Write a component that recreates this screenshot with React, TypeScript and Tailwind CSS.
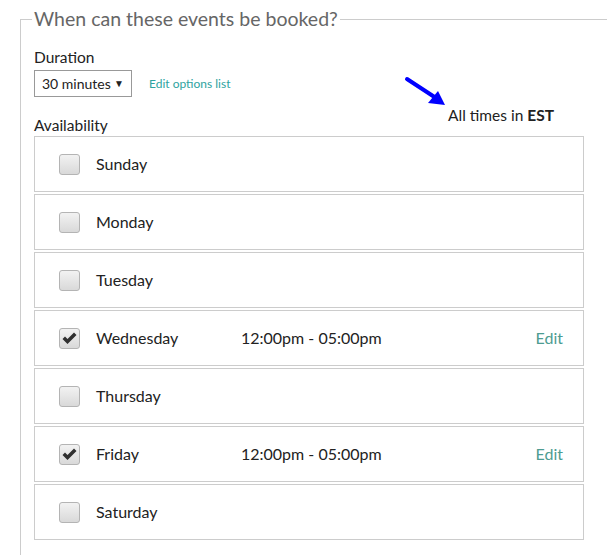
interface Day {
  name: string;
  checked: boolean;
  time?: string;
}

const days: Day[] = [
  { name: "Sunday", checked: false },
  { name: "Monday", checked: false },
  { name: "Tuesday", checked: false },
  { name: "Wednesday", checked: true, time: "12:00pm - 05:00pm" },
  { name: "Thursday", checked: false },
  { name: "Friday", checked: true, time: "12:00pm - 05:00pm" },
  { name: "Saturday", checked: false },
];

function Checkbox({ checked }: { checked: boolean }) {
  return (
    <div className="w-[21px] h-[21px] rounded-[3px] border border-[#b4b4b4] bg-gradient-to-b from-[#f2f2f2] to-[#d9d9d9] flex items-center justify-center shrink-0">
      {checked && (
        <svg width="15" height="13" viewBox="0 0 15 13">
          <polygon points="0.5,7 3,4.5 5.5,7 12,0.5 14.5,3 5.5,12" fill="#303030" />
        </svg>
      )}
    </div>
  );
}

export default function App() {
  return (
    <div className="bg-white w-[607px] h-[555px] overflow-hidden font-['Lato',sans-serif] text-[#222]">
      <fieldset className="ml-5 mt-[7px] w-[640px] border border-[#cccccc] pl-[13px] pb-10">
        <legend className="text-[19.5px] leading-[24px] text-[#666] px-[2px] -ml-[2px]">
          When can these events be booked?
        </legend>

        <div className="w-[550px] mt-[16px]">
          <div className="text-[15.5px] leading-5">Duration</div>
          <div className="flex items-center mt-[3px]">
            <div className="w-[98px] h-[27px] border border-[#999] flex items-center justify-between pl-[7px] pr-[7px] text-[14px] whitespace-nowrap">
              <span>30 minutes</span>
              <span className="text-[10px]">▼</span>
            </div>
            <span className="ml-[17px] text-[12px] text-[#2ea3a0] whitespace-nowrap">Edit options list</span>
          </div>

          <div className="relative flex justify-between items-start mt-[8px]">
            <span className="text-[15.5px] leading-5 mt-[10px]">Availability</span>
            <span className="text-[15.5px] leading-5 mr-[30px]">
              All times in <b className="font-bold">EST</b>
            </span>
            <svg
              className="absolute left-[370px] -top-[29px]"
              width="50"
              height="35"
              viewBox="0 0 50 35"
            >
              <line x1="3" y1="3" x2="32" y2="22" stroke="#0000ff" strokeWidth="4" strokeLinecap="round" />
              <polygon points="41,29 24,27 34,15" fill="#0000ff" />
            </svg>
          </div>

          <div className="flex flex-col gap-[2px] mt-[1px]">
            {days.map((d) => (
              <div
                key={d.name}
                className="h-[56px] border border-[#cccccc] flex items-center pl-6 pr-5 text-[16px]"
              >
                <Checkbox checked={d.checked} />
                <span className="ml-4 w-[145px]">{d.name}</span>
                {d.time && <span>{d.time}</span>}
                {d.time && <span className="ml-auto text-[#4d9c91]">Edit</span>}
              </div>
            ))}
          </div>
        </div>
      </fieldset>
    </div>
  );
}
